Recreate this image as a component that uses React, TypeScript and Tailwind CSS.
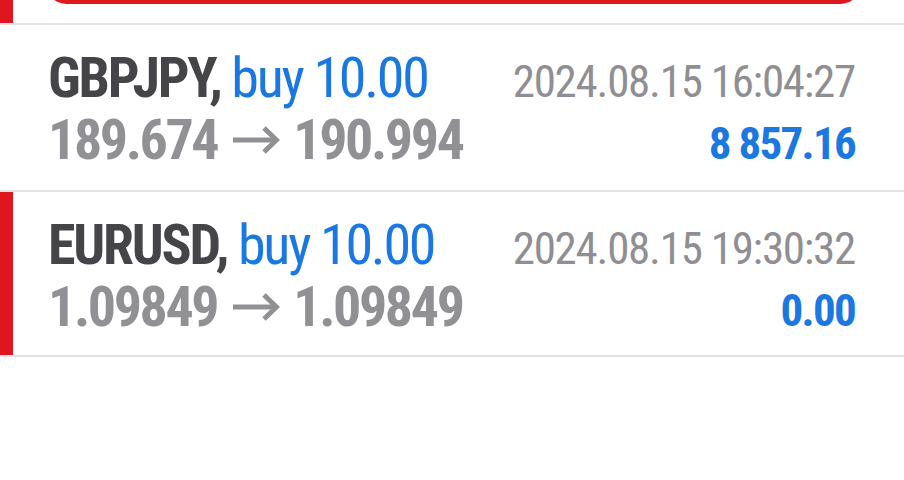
import React from "react";

type Deal = {
  symbol: string;
  side: string;
  open: string;
  close: string;
  time: string;
  profit: string;
  marked: boolean;
  h: string;
};

const deals: Deal[] = [
  { symbol: "GBPJPY,", side: "buy 10.00", open: "189.674", close: "190.994", time: "2024.08.15 16:04:27", profit: "8 857.16", marked: false, h: "h-[165px]" },
  { symbol: "EURUSD,", side: "buy 10.00", open: "1.09849", close: "1.09849", time: "2024.08.15 19:30:32", profit: "0.00", marked: true, h: "h-[163px]" },
];

function Arrow() {
  return (
    <svg
      width="47"
      height="28"
      viewBox="0 0 47 28"
      className="inline-block ml-[16px] mr-[13px] align-[5px]"
      fill="none"
      stroke="#919195"
      strokeWidth="5"
      strokeLinecap="butt"
      strokeLinejoin="miter"
    >
      <path d="M0 14H43" />
      <path d="M31 2L43.5 14L31 26" />
    </svg>
  );
}

function Row({ d }: { d: Deal }) {
  return (
    <div className={`flex ${d.h}`}>
      <div className={`w-[13px] shrink-0 ${d.marked ? "bg-[#e0161e]" : "bg-white"}`} />
      <div className="flex-1 pl-[35px] pr-[49px] pt-[24px]">
        <div className="flex items-baseline justify-between leading-[59px]">
          <div className="text-[56px] tracking-[-2.2px] whitespace-nowrap">
            <span className="font-bold text-[#454549]">{d.symbol}</span>{" "}
            <span className="text-[#1a78e0]">{d.side}</span>
          </div>
          <div className="text-[45px] tracking-[-1.25px] text-[#8f8f93] whitespace-nowrap">{d.time}</div>
        </div>
        <div className="flex items-baseline justify-between leading-[59px]">
          <div className="text-[56px] font-bold text-[#919195] tracking-[-2.4px] whitespace-nowrap">
            {d.open}
            <Arrow />
            {d.close}
          </div>
          <div className="text-[45px] font-bold text-[#1a78e0] tracking-[-1.7px] whitespace-nowrap">{d.profit}</div>
        </div>
      </div>
    </div>
  );
}

export default function App() {
  return (
    <div
      className="w-[904px] h-[480px] bg-white overflow-hidden"
      style={{ fontFamily: "Roboto, 'Liberation Sans', sans-serif", fontStretch: "75%" }}
    >
      <div className="flex h-[23px] overflow-hidden">
        <div className="w-[13px] shrink-0 bg-[#e0161e]" />
        <div className="flex-1 pl-[32px] pr-[42px]">
          <div className="-mt-[40px] h-[44px] rounded-[24px] bg-[#e0161e]" />
        </div>
      </div>
      <div className="h-[2px] bg-[#e4e4e4]" />
      <Row d={deals[0]} />
      <div className="h-[2px] bg-[#e4e4e4]" />
      <Row d={deals[1]} />
      <div className="h-[2px] bg-[#e4e4e4]" />
    </div>
  );
}
